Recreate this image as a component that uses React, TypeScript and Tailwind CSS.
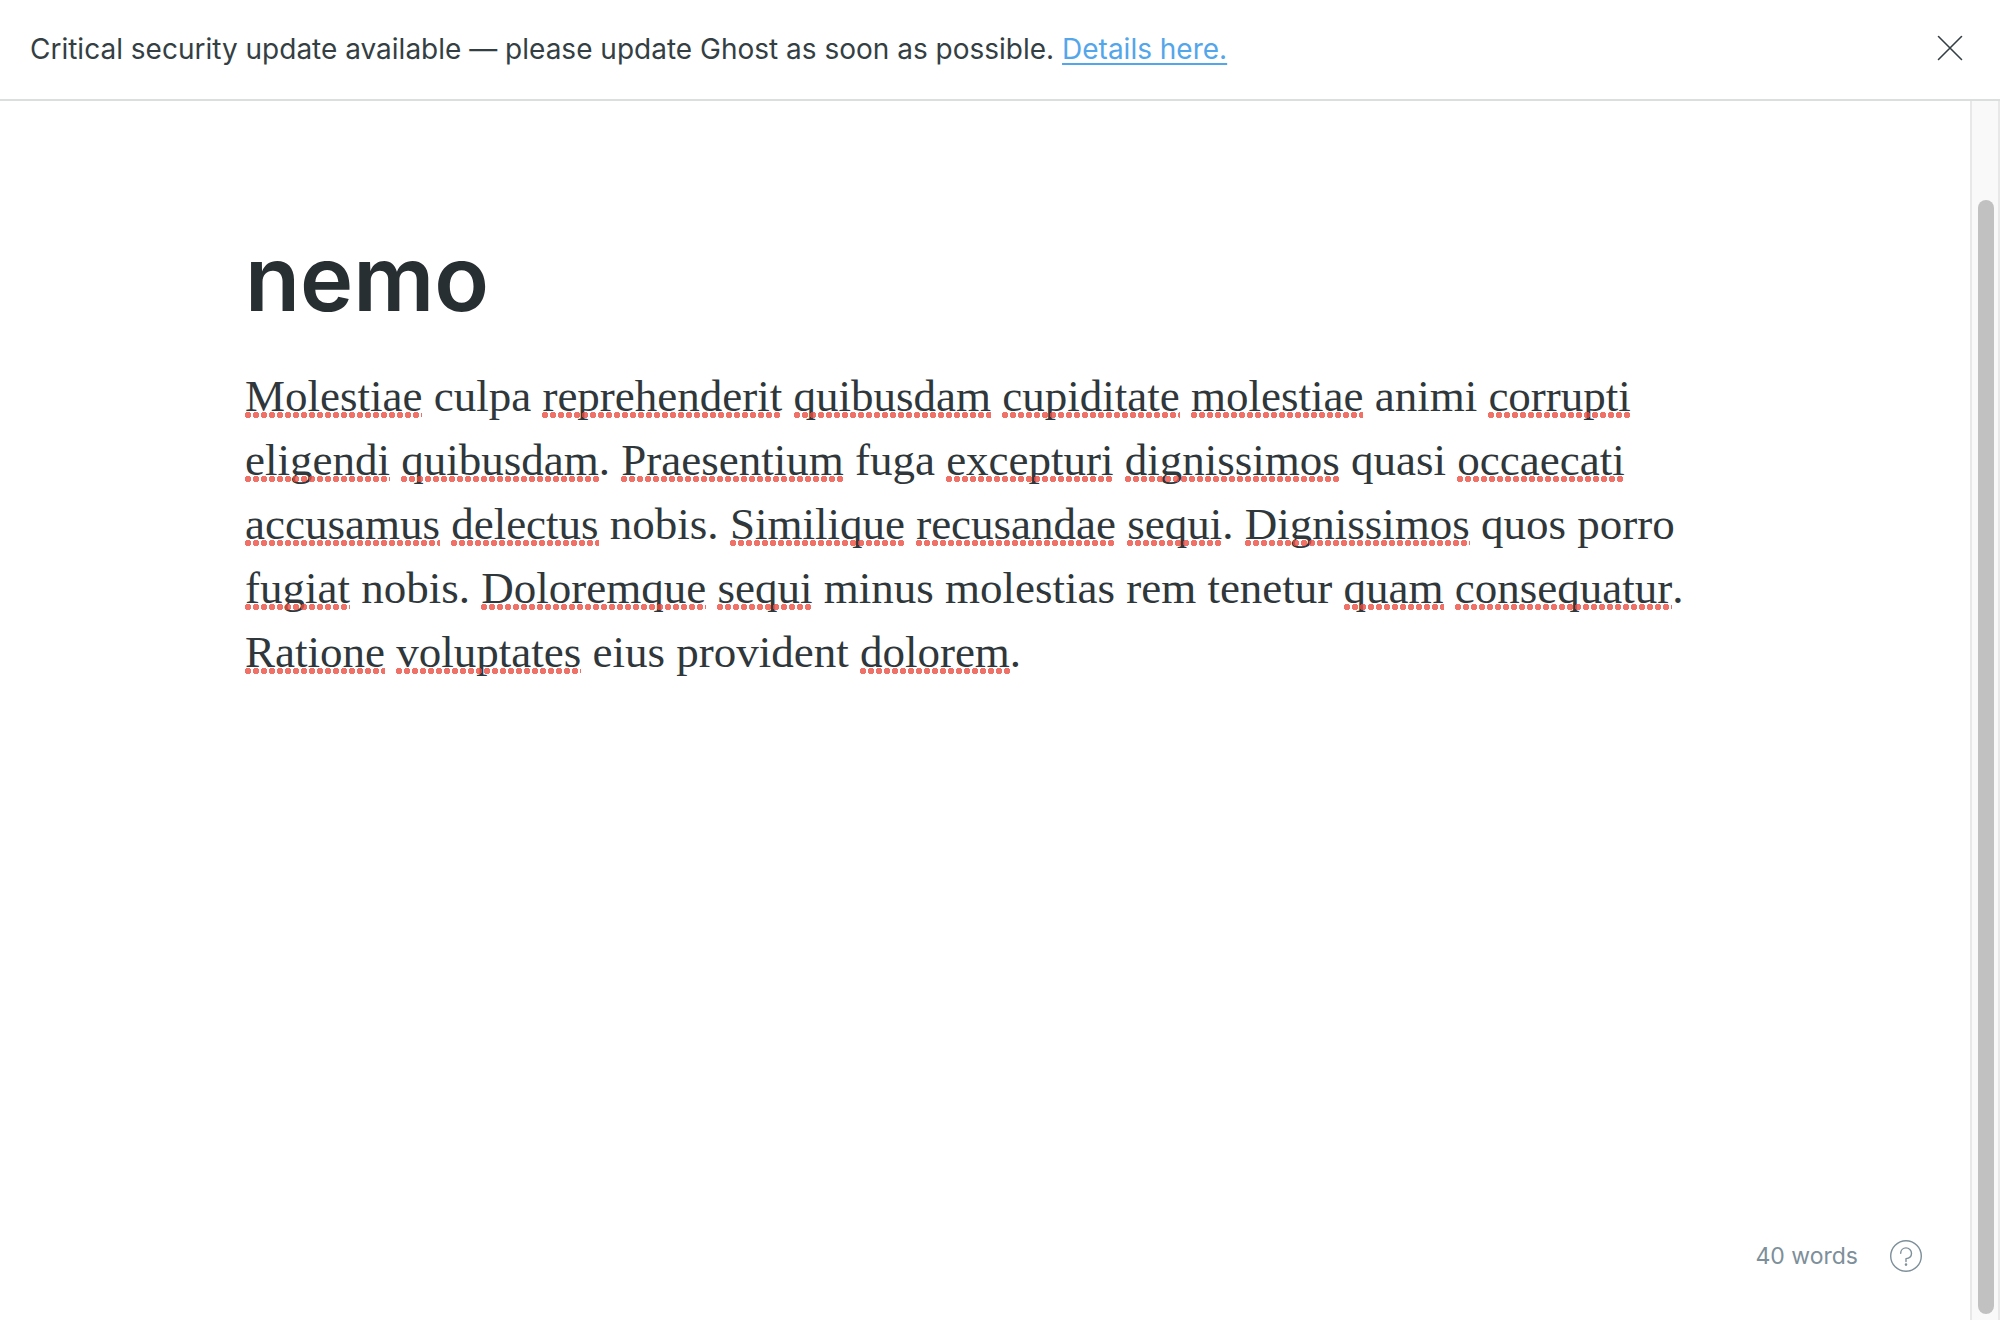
import { useState } from "react";

// Words wrapped in underscores are marked by the spell checker.
const LINES = [
  "_Molestiae_ culpa _reprehenderit_ _quibusdam_ _cupiditate_ _molestiae_ animi _corrupti_",
  "_eligendi_ _quibusdam_. _Praesentium_ fuga _excepturi_ _dignissimos_ quasi _occaecati_",
  "_accusamus_ _delectus_ nobis. _Similique_ _recusandae_ _sequi_. _Dignissimos_ quos porro",
  "_fugiat_ nobis. _Doloremque_ _sequi_ minus molestias rem tenetur _quam_ _consequatur_.",
  "_Ratione_ _voluptates_ eius provident _dolorem_.",
];

function Misspelled({ children }: { children: string }) {
  return (
    <span className="relative inline-block after:pointer-events-none after:absolute after:inset-x-0 after:bottom-[10px] after:h-[6px] after:[background-image:radial-gradient(circle_at_3px_3px,#eb4a3dc8_0px,#eb4a3dc8_3px,transparent_3px)] after:[background-size:8px_6px] after:[background-repeat:repeat_no-repeat] after:content-['']">
      {children}
    </span>
  );
}

function Line({ text }: { text: string }) {
  return (
    <span className="block">
      {text.split("_").map((part, i) =>
        i % 2 ? <Misspelled key={i}>{part}</Misspelled> : <span key={i}>{part}</span>,
      )}
    </span>
  );
}

function Banner({ onClose }: { onClose: () => void }) {
  return (
    <header className="flex shrink-0 items-start justify-between border-b-2 border-[#dcdede] pt-7 pr-9 pb-7 pl-[30px]">
      <p className="text-[28px] leading-[43px] text-[#343f44]">
        Critical security update available — please update Ghost as soon as possible.{" "}
        <a href="#details" className="text-[#54a6ea] underline decoration-2 underline-offset-4">
          Details here.
        </a>
      </p>
      <button type="button" aria-label="Close" onClick={onClose} className="flex h-10 items-center text-[#343f44]">
        <svg className="size-7" viewBox="0 0 28 28" fill="none" stroke="currentColor" strokeWidth="1.6" strokeLinecap="round">
          <path d="M2.5 2.5l23 23M25.5 2.5l-23 23" />
        </svg>
      </button>
    </header>
  );
}

export default function App() {
  const [title, setTitle] = useState("nemo");
  const [open, setOpen] = useState(true);

  return (
    <div className="flex h-screen flex-col bg-white font-['Inter','Liberation_Sans',sans-serif]">
      {open && <Banner onClose={() => setOpen(false)} />}
      <div className="flex min-h-0 flex-1">
        <main className="flex min-w-0 flex-1 flex-col">
          <div className="mx-auto w-full max-w-[1480px] flex-1 pt-[119px]">
            <input
              aria-label="Post title"
              value={title}
              spellCheck={false}
              onChange={(e) => setTitle(e.target.value)}
              className="block h-[116px] w-full bg-transparent text-[90px] font-semibold text-[#282f33] outline-none"
            />
            <div
              role="textbox"
              aria-label="Post content"
              aria-multiline="true"
              className="mt-7 font-['Liberation_Serif',serif] text-[45px] leading-[64px] whitespace-nowrap text-[#2f373b]"
            >
              {LINES.map((line) => (
                <Line key={line} text={line} />
              ))}
            </div>
          </div>
          <footer className="flex items-center justify-end gap-8 pr-12 pb-12 text-[#7d8f9a]">
            <span className="text-[23px] leading-8">40 words</span>
            <button type="button" aria-label="Help">
              <svg className="size-8" viewBox="0 0 32 32" fill="none" stroke="currentColor" strokeWidth="1.4" strokeLinecap="round" strokeLinejoin="round">
                <circle cx="16" cy="16" r="15.3" />
                <path d="M10.7 13.2c0-3 2.3-5.3 5.3-5.3s5.5 2.3 5.5 5.3-2.4 5.1-5.5 5.4v3" />
                <circle cx="16" cy="24.6" r=".6" fill="currentColor" />
              </svg>
            </button>
          </footer>
        </main>
        <div aria-hidden="true" className="flex w-[30px] shrink-0 justify-end border-x-2 border-[#e8e8e8] bg-[#f9f9f9] pt-[99px] pr-1 pb-[6px]">
          <div className="w-4 rounded-full bg-[#c1c1c1]" />
        </div>
      </div>
    </div>
  );
}
